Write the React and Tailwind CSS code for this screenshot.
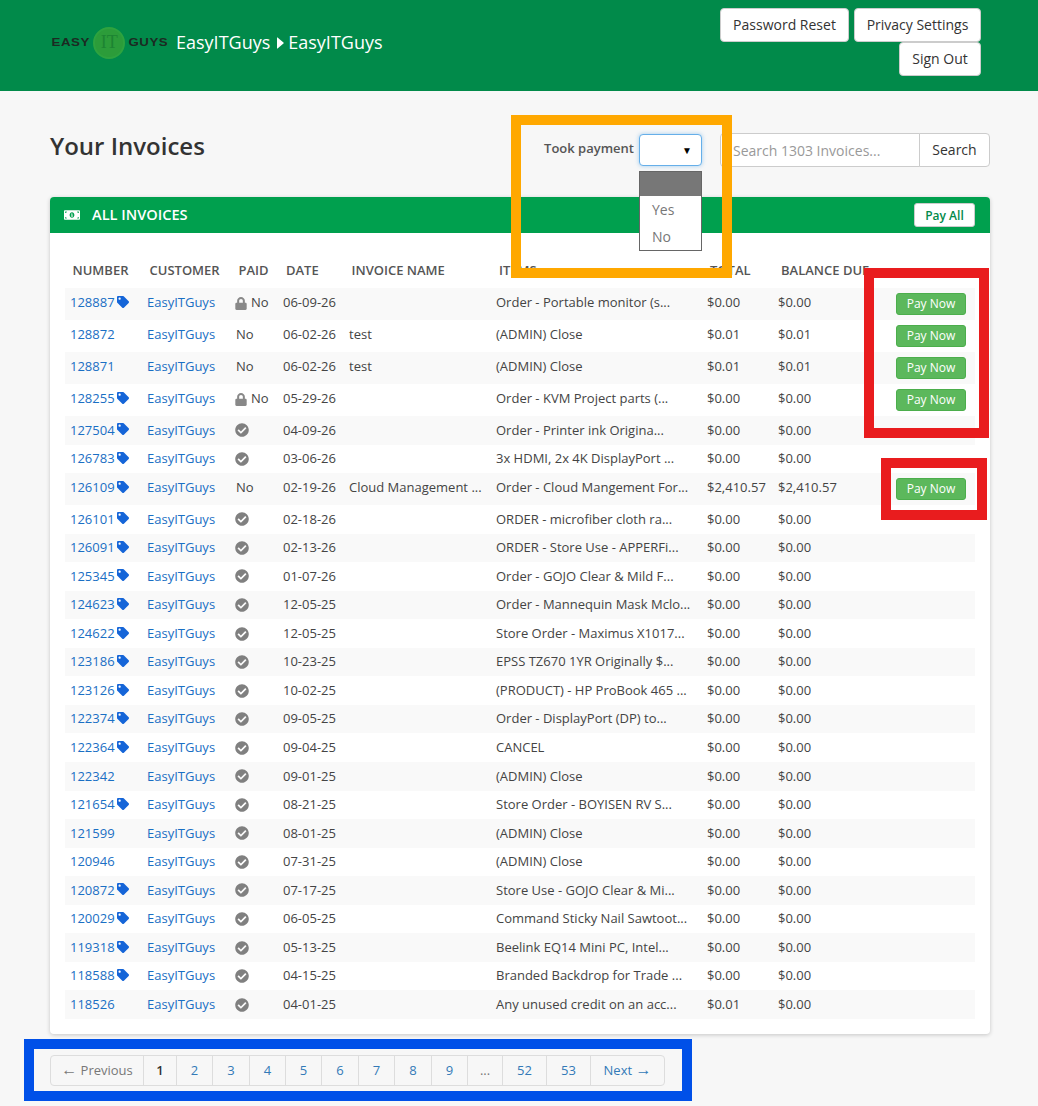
import React from "react";
import { FaTag, FaLock, FaCheckCircle, FaMoneyBillAlt } from "react-icons/fa";

const rows = [
  ["128887", 1, "lock", "06-09-26", "", "Order - Portable monitor (s...", "$0.00", "$0.00", 1],
  ["128872", 0, "no", "06-02-26", "test", "(ADMIN) Close", "$0.01", "$0.01", 1],
  ["128871", 0, "no", "06-02-26", "test", "(ADMIN) Close", "$0.01", "$0.01", 1],
  ["128255", 1, "lock", "05-29-26", "", "Order - KVM Project parts (...", "$0.00", "$0.00", 1],
  ["127504", 1, "ok", "04-09-26", "", "Order - Printer ink Origina...", "$0.00", "$0.00", 0],
  ["126783", 1, "ok", "03-06-26", "", "3x HDMI, 2x 4K DisplayPort ...", "$0.00", "$0.00", 0],
  ["126109", 1, "no", "02-19-26", "Cloud Management ...", "Order - Cloud Mangement For...", "$2,410.57", "$2,410.57", 1],
  ["126101", 1, "ok", "02-18-26", "", "ORDER - microfiber cloth ra...", "$0.00", "$0.00", 0],
  ["126091", 1, "ok", "02-13-26", "", "ORDER - Store Use - APPERFi...", "$0.00", "$0.00", 0],
  ["125345", 1, "ok", "01-07-26", "", "Order - GOJO Clear & Mild F...", "$0.00", "$0.00", 0],
  ["124623", 1, "ok", "12-05-25", "", "Order - Mannequin Mask Mclo...", "$0.00", "$0.00", 0],
  ["124622", 1, "ok", "12-05-25", "", "Store Order - Maximus X1017...", "$0.00", "$0.00", 0],
  ["123186", 1, "ok", "10-23-25", "", "EPSS TZ670 1YR Originally $...", "$0.00", "$0.00", 0],
  ["123126", 1, "ok", "10-02-25", "", "(PRODUCT) - HP ProBook 465 ...", "$0.00", "$0.00", 0],
  ["122374", 1, "ok", "09-05-25", "", "Order - DisplayPort (DP) to...", "$0.00", "$0.00", 0],
  ["122364", 1, "ok", "09-04-25", "", "CANCEL", "$0.00", "$0.00", 0],
  ["122342", 0, "ok", "09-01-25", "", "(ADMIN) Close", "$0.00", "$0.00", 0],
  ["121654", 1, "ok", "08-21-25", "", "Store Order - BOYISEN RV S...", "$0.00", "$0.00", 0],
  ["121599", 0, "ok", "08-01-25", "", "(ADMIN) Close", "$0.00", "$0.00", 0],
  ["120946", 0, "ok", "07-31-25", "", "(ADMIN) Close", "$0.00", "$0.00", 0],
  ["120872", 1, "ok", "07-17-25", "", "Store Use - GOJO Clear & Mi...", "$0.00", "$0.00", 0],
  ["120029", 1, "ok", "06-05-25", "", "Command Sticky Nail Sawtoot...", "$0.00", "$0.00", 0],
  ["119318", 1, "ok", "05-13-25", "", "Beelink EQ14 Mini PC, Intel...", "$0.00", "$0.00", 0],
  ["118588", 1, "ok", "04-15-25", "", "Branded Backdrop for Trade ...", "$0.00", "$0.00", 0],
  ["118526", 0, "ok", "04-01-25", "", "Any unused credit on an acc...", "$0.01", "$0.00", 0],
];

const arrow = "font-['Liberation_Sans',sans-serif] text-[16px] leading-none";
const pages = [
  [<><span className={arrow}>←</span> Previous</>, "w-[92px] text-[#777777]"],
  ["1", "w-[33px] font-semibold text-[#333333]"],
  ["2", "w-[36px] text-[#337ab7]"],
  ["3", "w-[37px] text-[#337ab7]"],
  ["4", "w-[36px] text-[#337ab7]"],
  ["5", "w-[36px] text-[#337ab7]"],
  ["6", "w-[37px] text-[#337ab7]"],
  ["7", "w-[36px] text-[#337ab7]"],
  ["8", "w-[37px] text-[#337ab7]"],
  ["9", "w-[36px] text-[#337ab7]"],
  ["...", "w-[35px] text-[#777777]"],
  ["52", "w-[44px] text-[#337ab7]"],
  ["53", "w-[44px] text-[#337ab7]"],
  [<>Next <span className={arrow}>→</span></>, "w-[74px] text-[#337ab7]"],
];

function TopButton({ children, width }) {
  return (
    <button className={`h-[34px] rounded-[4px] border border-[#cccccc] bg-white pb-[2px] text-[14px] text-[#333333] ${width}`}>
      {children}
    </button>
  );
}

function Logo() {
  return (
    <div className="flex w-[116px] items-center justify-between font-['Liberation_Sans',sans-serif] text-[11.5px] font-bold tracking-[0.5px] text-[#1c2a22]">
      <span className="ml-[2px] scale-x-[1.15]">EASY</span>
      <span className="flex h-8 w-8 items-center justify-center rounded-full border-2 border-[#2ea33f] bg-[#2c9c3a] font-['Liberation_Serif',serif] text-[18px] font-normal tracking-normal text-[#1c8432]">
        IT
      </span>
      <span className="mr-[2px] scale-x-[1.15]">GUYS</span>
    </div>
  );
}

function Paid({ kind }) {
  if (kind === "lock")
    return (
      <span className="flex items-center gap-1">
        <FaLock className="h-[13px] w-[12px] text-[#888888]" />
        <span>No</span>
      </span>
    );
  if (kind === "no") return <span className="pl-px">No</span>;
  return <FaCheckCircle className="h-[14px] w-[14px] text-[#808080]" />;
}

export default function App() {
  return (
    <div className="relative min-h-[1106px] bg-[#f7f7f7] font-['Open_Sans',sans-serif] text-[13px] text-[#444444]">
      <header className="flex h-[91px] justify-between bg-[#018a4a] pl-[52px] pr-[57px]">
        <div className="flex items-center pb-[6px] text-[18px] text-white">
          <Logo />
          <span className="ml-2">EasyITGuys</span>
          <svg className="ml-[7px] mr-1 h-3 w-[7px]" viewBox="0 0 7 12" fill="currentColor">
            <path d="M0.5 0.5 L6.5 5.5 Q7 6 6.5 6.5 L0.5 11.5 Q0 12 0 11 L0 1 Q0 0 0.5 0.5 Z" />
          </svg>
          <span>EasyITGuys</span>
        </div>
        <div className="flex w-[270px] flex-wrap content-start justify-end gap-x-[5px] pt-2">
          <TopButton width="w-[129px]">Password Reset</TopButton>
          <TopButton width="w-[127px]">Privacy Settings</TopButton>
          <TopButton width="w-[82px]">Sign Out</TopButton>
        </div>
      </header>

      <main className="pl-[50px] pr-[48px] pt-[42px]">
        <div className="mb-[30px] flex h-[34px] items-center">
          <h1 className="mb-2 text-[24px] font-semibold text-[#333333]">Your Invoices</h1>
          <div className="ml-auto flex items-center">
            <span className="mb-[2px] mr-[5px] font-semibold text-[#555555]">Took payment</span>
            <div className="relative mr-[18px]">
              <div className="relative flex h-[32px] w-[63px] items-center justify-end rounded-[4px] border border-[#66afe9] bg-white pr-[9px] text-[10px] text-black shadow-[0_0_4px_rgba(102,175,233,0.6)]">
                ▼
              </div>
              <div className="absolute left-0 top-[37px] z-10 w-[63px] border border-[#666666] bg-white text-[14px] text-[#777777]">
                <div className="h-[24px] bg-[#777777]" />
                <div className="flex h-[27px] items-center pl-3">Yes</div>
                <div className="flex h-[27px] items-center pl-3">No</div>
              </div>
            </div>
            <div className="flex h-[34px]">
              <div className="flex w-[200px] items-center rounded-l-[4px] border border-[#cccccc] bg-white pl-3 text-[14px] text-[#999999]">
                Search 1303 Invoices...
              </div>
              <button className="ml-[-1px] w-[71px] rounded-r-[4px] border border-[#cccccc] bg-white pb-[2px] text-[14px] text-[#333333]">
                Search
              </button>
            </div>
          </div>
        </div>

        <section className="rounded-[4px] bg-white shadow-[0_1px_4px_rgba(0,0,0,0.2)]">
          <div className="flex h-[36px] items-center rounded-t-[4px] bg-[#00a04e] pl-[14px] pr-[15px] text-white">
            <FaMoneyBillAlt className="h-4 w-4" />
            <span className="ml-[12px] text-[14.6px] font-semibold">ALL INVOICES</span>
            <button className="ml-auto h-[24px] w-[61px] rounded-[3px] border border-[#cccccc] bg-white pt-px text-[12px] font-semibold text-[#018a4a]">
              Pay All
            </button>
          </div>
          <div className="px-[15px] pb-[15px] pt-[22px]">
            <table className="w-full table-fixed border-collapse">
              <colgroup>
                <col className="w-[77px]" />
                <col className="w-[89px]" />
                <col className="w-[47px]" />
                <col className="w-[66px]" />
                <col className="w-[147px]" />
                <col className="w-[211px]" />
                <col className="w-[71px]" />
                <col className="w-[111px]" />
                <col />
              </colgroup>
              <thead>
                <tr className="h-[33px] text-left text-[13px] font-semibold text-[#555555]">
                  <th className="pb-px pl-[7.5px] font-semibold">NUMBER</th>
                  <th className="pb-px pl-[7.5px] font-semibold">CUSTOMER</th>
                  <th className="pb-px pl-[7.5px] font-semibold">PAID</th>
                  <th className="pb-px pl-2 font-semibold">DATE</th>
                  <th className="pb-px pl-[7.5px] font-semibold">INVOICE NAME</th>
                  <th className="pb-px pl-2 font-semibold">ITEMS</th>
                  <th className="pb-px pl-2 font-semibold">TOTAL</th>
                  <th className="whitespace-nowrap pb-px pl-2 font-semibold">BALANCE DUE</th>
                  <th />
                </tr>
              </thead>
              <tbody>
                {rows.map((r, i) => {
                  const cell = r[8] ? "pb-[2px] pl-[5px]" : "pl-[5px]";
                  return (
                    <tr key={r[0]} className={`${r[8] ? "h-[32px]" : "h-[28.56px]"} ${i % 2 === 0 ? "bg-[#f9f9f9]" : "bg-white"}`}>
                      <td className={cell}>
                        <span className="flex items-center gap-[2px] text-[#1a6fc4]">
                          {r[0]}
                          {r[1] ? <FaTag className="mb-[2px] h-[12px] w-[12px] text-[#1565d8]" /> : null}
                        </span>
                      </td>
                      <td className={`${cell} text-[#1a6fc4]`}>EasyITGuys</td>
                      <td className={r[8] ? "pb-[2px] pl-[4px]" : "pl-[4px]"}><Paid kind={r[2]} /></td>
                      <td className={cell}>{r[3]}</td>
                      <td className={`${cell} whitespace-nowrap`}>{r[4]}</td>
                      <td className={`${cell} whitespace-nowrap`}>{r[5]}</td>
                      <td className={cell}>{r[6]}</td>
                      <td className={cell}>{r[7]}</td>
                      <td className="pr-[9px] text-right">
                        {r[8] ? (
                          <button className="h-[22px] w-[70px] rounded-[3px] border border-[#4cae4c] bg-[#5cb85c] pb-px text-[12px] text-white">
                            Pay Now
                          </button>
                        ) : null}
                      </td>
                    </tr>
                  );
                })}
              </tbody>
            </table>
          </div>
        </section>

        <nav className="mt-[21px] flex h-[31px] w-[615px] overflow-hidden rounded-[4px] border border-[#dddddd]">
          {pages.map(([label, cls], i) => (
            <span key={i} className={`flex items-center justify-center whitespace-pre ${i ? "border-l border-[#dddddd]" : ""} ${cls}`}>
              {label}
            </span>
          ))}
        </nav>
      </main>

      <div className="pointer-events-none absolute left-[511px] top-[115px] h-[163px] w-[221px] border-[10px] border-[#ffa800]" />
      <div className="pointer-events-none absolute left-[864px] top-[268px] h-[170px] w-[125px] border-[10px] border-[#e91c1e]" />
      <div className="pointer-events-none absolute left-[881px] top-[458px] h-[62px] w-[106px] border-[10px] border-[#e91c1e]" />
      <div className="pointer-events-none absolute left-[24px] top-[1039px] h-[62px] w-[668px] border-[10px] border-[#0050e8]" />
    </div>
  );
}
